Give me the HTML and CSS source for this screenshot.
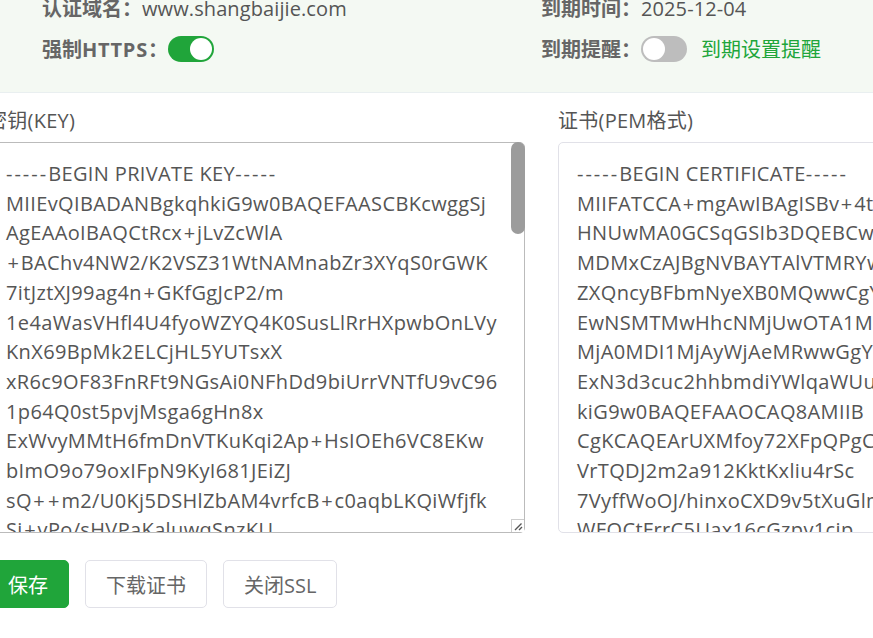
FILE: index.html
```html
<!DOCTYPE html>
<html lang="zh-CN">
<head>
<meta charset="utf-8">
<title>SSL</title>
<link rel="stylesheet" href="styles.css">
</head>
<body>
<main class="page">
  <section class="info">
    <div class="info-col">
      <div class="info-row"><span class="label">认证域名：</span><span class="value">www.shangbaijie.com</span></div>
      <div class="info-row"><span class="label">强制<span class="label-en">HTTPS</span>：</span><span class="switch on"><i class="knob"></i></span></div>
    </div>
    <div class="info-col">
      <div class="info-row"><span class="label">到期时间：</span><span class="value">2025-12-04</span></div>
      <div class="info-row"><span class="label">到期提醒：</span><span class="switch"><i class="knob"></i></span><a class="link">到期设置提醒</a></div>
    </div>
  </section>
  <section class="fields">
    <div class="field">
      <div class="field-label">密钥(KEY)</div>
      <div class="pem-wrap">
        <div class="pem pem-key" role="textbox"><span class="dash">-----</span>BEGIN PRIVATE KEY<span class="dash">-----</span>
MIIEvQIBADANBgkqhkiG9w0BAQEFAASCBKcwggSj
AgEAAoIBAQCtRcx<span class="plus">+</span>jLvZcWlA
<span class="plus">+</span>BAChv4NW2/K2VSZ31WtNAMnabZr3XYqS0rGWK
7itJztXJ99ag4n<span class="plus">+</span>GKfGgJcP2/m
1e4aWasVHfl4U4fyoWZYQ4K0SusLlRrHXpwbOnLVy
KnX69BpMk2ELCjHL5YUTsxX
xR6c9OF83FnRFt9NGsAi0NFhDd9biUrrVNTfU9vC96
1p64Q0st5pvjMsga6gHn8x
ExWvyMMtH6fmDnVTKuKqi2Ap<span class="plus">+</span>HsIOEh6VC8EKw
bImO9o79oxIFpN9KyI681JEiZJ
sQ<span class="plus">+</span><span class="plus">+</span>m2/U0Kj5DSHlZbAM4vrfcB<span class="plus">+</span>c0aqbLKQiWfjfk
Si<span class="plus">+</span>vPo/sHVPaKaluwqSnzKU</div>
        <div class="thumb"></div>
        <div class="grip">
          <svg class="grip-icon" viewBox="0 0 12 12" width="12" height="12"><path d="M9.5 3.5 3 10M10 7 7 10" fill="none" stroke="#555" stroke-width="1.4"/></svg>
        </div>
      </div>
    </div>
    <div class="field">
      <div class="field-label">证书(PEM格式)</div>
      <div class="pem-wrap">
        <div class="pem" role="textbox"><span class="dash">-----</span>BEGIN CERTIFICATE<span class="dash">-----</span>
MIIFATCCA<span class="plus">+</span>mgAwIBAgISBv<span class="plus">+</span>4tXqZ
HNUwMA0GCSqGSIb3DQEBCwUAMDMx
MDMxCzAJBgNVBAYTAlVTMRYwFAYD
ZXQncyBFbmNyeXB0MQwwCgYDVQQD
EwNSMTMwHhcNMjUwOTA1MDI1MjAy
MjA0MDI1MjAyWjAeMRwwGgYDVQQD
ExN3d3cuc2hhbmdiYWlqaWUuY29t
kiG9w0BAQEFAAOCAQ8AMIIB
CgKCAQEArUXMfoy72XFpQPgCIa
VrTQDJ2m2a912KktKxliu4rSc
7VyffWoOJ/hinxoCXD9v5tXuGlmQ
WFQCtFrrC5Uax16cGzpv1cip</div>
      </div>
    </div>
  </section>
  <div class="actions">
    <button class="btn btn-primary">保存</button>
    <button class="btn">下载证书</button>
    <button class="btn">关闭SSL</button>
  </div>
</main>
</body>
</html>
```
FILE: styles.css
```css
* { box-sizing: border-box; }
html, body { margin: 0; height: 100%; overflow: hidden; background: #fff; }
body { font-family: "Open Sans", "Noto Sans CJK SC", sans-serif; color: #555; font-size: 20px; }
.page { margin: -14px 0 0 -13px; width: 1110px; }
.info { display: flex; height: 107px; padding: 8px 0 0 55px; background: #f4f9f3; border-bottom: 1px solid #e9eff0; }
.info-col { width: 499px; display: flex; flex-direction: column; gap: 13px; }
.info-row { display: flex; align-items: center; height: 28px; white-space: nowrap; }
.label { font-weight: 700; color: #666; padding-bottom: 2px; }
.label-en { letter-spacing: 0.8px; }
.value { color: #555; letter-spacing: 0.1px; }
.switch { width: 46px; height: 26px; border-radius: 13px; background: #bdbdbd; padding: 2px; display: flex; }
.switch.on { background: #20a53a; justify-content: flex-end; }
.knob { width: 22px; height: 22px; border-radius: 50%; background: #fff; }
.link { margin-left: 14px; color: #20a53a; padding-bottom: 2px; }
.fields { display: flex; gap: 33px; padding-top: 14px; }
.field { width: 538px; flex: none; }
.field-label { height: 35px; line-height: 28px; letter-spacing: 0.25px; }
.pem-wrap { position: relative; }
.pem { height: 391px; padding: 16px 18px; border: 1px solid #e1e1e8; border-radius: 5px; font: 20px/29.7px "Open Sans", sans-serif; letter-spacing: 0.36px; color: #555; overflow: hidden; background: #fff; white-space: pre; }
.pem-key { border-color: #bbb; }
.dash { letter-spacing: 2px; }
.plus { padding: 0 1.5px; }
.thumb { position: absolute; top: 0; right: 0; width: 14px; height: 92px; background: #9c9c9c; border-radius: 7px; }
.grip { position: absolute; right: 1px; bottom: 1px; width: 13px; height: 13px; background: #fff; border: solid #ccc; border-width: 1px 0 0 1px; display: flex; }
.grip-icon { margin: auto; }
.actions { display: flex; gap: 16px; margin-top: 27px; }
.btn { height: 48px; padding: 0 20px; font: 20px "Open Sans", "Noto Sans CJK SC", sans-serif; color: #666; background: #fff; border: 1px solid #e1e1e8; border-radius: 5px; }
.btn-primary { color: #fff; background: #20a53a; border-color: #20a53a; }
```
